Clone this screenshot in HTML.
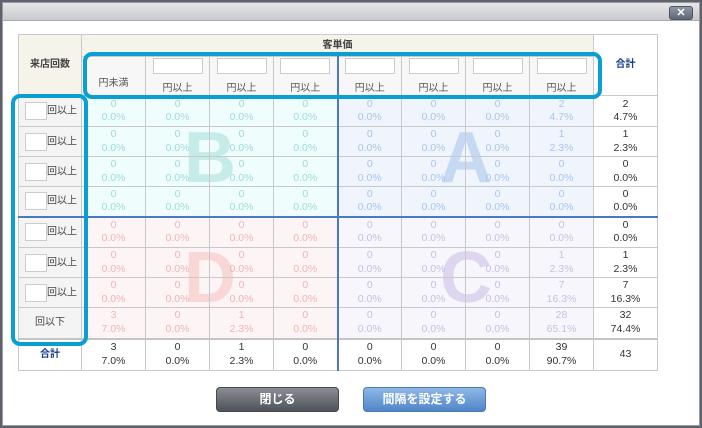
<!DOCTYPE html>
<html><head><meta charset="utf-8"><style>
*{margin:0;padding:0;box-sizing:border-box}
body{width:702px;height:428px;overflow:hidden;background:#5d626c;font-family:"Liberation Sans","Noto Sans CJK JP",sans-serif;position:relative}
.win{position:absolute;left:2px;top:2px;width:698px;height:424px;background:#fff;border:1px solid #9a9ca2}
.title{position:absolute;left:0;top:0;width:100%;height:18px;background:linear-gradient(#e6e6e8,#c9cacd);border-bottom:1px solid #a9abb0}
.x{position:absolute;left:666px;top:3px;width:24px;height:14px;border-radius:3px;background:linear-gradient(#8f97a6,#5f6878);border:1px solid #4d5562;color:#fff;font-size:11px;text-align:center;line-height:12px;font-weight:bold}
.q{position:absolute}
.L{position:absolute;font-size:72px;font-weight:bold;line-height:72px;text-align:center;width:80px}
table{position:absolute;left:18px;top:34px;border-collapse:collapse;table-layout:fixed;font-size:10.5px}
td{border:1px solid #c9c9c9;text-align:center;vertical-align:middle;line-height:13.5px;padding:0;overflow:hidden}
.h{background:#f6f3ea;color:#444;font-weight:bold;font-size:10px}
.h2{background:#f7f7f7;color:#555;font-size:10px;vertical-align:bottom;padding-bottom:0}
.rh{background:#f4f4f4;color:#444;font-size:10px;text-align:right;padding-right:4px}
.box{display:inline-block;width:50px;height:16px;border:1px solid #ccc;background:#fff;margin-bottom:3px}
.sb{display:inline-block;width:22px;height:18px;border:1px solid #ccc;background:#fff;vertical-align:middle}
.tot{background:#fff;color:#333}
.blue{color:#1a3f8f;font-weight:bold;font-size:10px}
.b{color:#9edcd6}.a{color:#a9c5ec}.d{color:#f2b3b3}.c{color:#c8bfe3}
.ring{position:absolute;border:4px solid #0a9fd2;border-radius:9px}
.btn{position:absolute;top:387px;height:25px;width:123px;border-radius:4px;color:#fff;font-size:12px;font-weight:bold;text-align:center;line-height:23px}
tr.r td{height:30px}
tr.s td{height:31px}
</style></head><body>
<div class="win"><div class="title"></div><div class="x">✕</div></div>
<div class="q" style="left:81px;top:95px;width:256px;height:121px;background:#f0fdfd"></div>
<div class="q" style="left:337px;top:95px;width:256px;height:121px;background:#eff4fd"></div>
<div class="q" style="left:81px;top:216px;width:256px;height:122px;background:#fdf5f5"></div>
<div class="q" style="left:337px;top:216px;width:256px;height:122px;background:#f7f6fc"></div>
<div class="L" style="left:170px;top:122px;color:#c6ecea">B</div>
<div class="L" style="left:426px;top:122px;color:#c6d9f3">A</div>
<div class="L" style="left:170px;top:242px;color:#f9d7d7">D</div>
<div class="L" style="left:426px;top:242px;color:#ddd6ee">C</div>
<table>
<colgroup><col style="width:63px"><col style="width:64px"><col style="width:64px"><col style="width:64px"><col style="width:64px"><col style="width:64px"><col style="width:64px"><col style="width:64px"><col style="width:64px"><col style="width:64px"></colgroup>
<tr><td class="h" rowspan="2" style="height:61px">来店回数</td><td class="h" colspan="8" style="height:22px">客単価</td><td class="tot blue" rowspan="2">合計</td></tr>
<tr><td class="h2" style="padding-bottom:5px;height:39px">円未満</td>
<td class="h2"><span class="box"></span><br>円以上</td><td class="h2"><span class="box"></span><br>円以上</td><td class="h2" style="border-right:2px solid #4a78c4"><span class="box"></span><br>円以上</td><td class="h2"><span class="box"></span><br>円以上</td><td class="h2"><span class="box"></span><br>円以上</td><td class="h2"><span class="box"></span><br>円以上</td><td class="h2"><span class="box"></span><br>円以上</td></tr>
<tr class="s"><td class="rh"><span class="sb"></span>回以上</td><td class="b">0<br>0.0%</td><td class="b">0<br>0.0%</td><td class="b">0<br>0.0%</td><td class="b" style="border-right:2px solid #4a78c4">0<br>0.0%</td><td class="a">0<br>0.0%</td><td class="a">0<br>0.0%</td><td class="a">0<br>0.0%</td><td class="a">2<br>4.7%</td><td class="tot">2<br>4.7%</td></tr>
<tr class="r"><td class="rh"><span class="sb"></span>回以上</td><td class="b">0<br>0.0%</td><td class="b">0<br>0.0%</td><td class="b">0<br>0.0%</td><td class="b" style="border-right:2px solid #4a78c4">0<br>0.0%</td><td class="a">0<br>0.0%</td><td class="a">0<br>0.0%</td><td class="a">0<br>0.0%</td><td class="a">1<br>2.3%</td><td class="tot">1<br>2.3%</td></tr>
<tr class="r"><td class="rh"><span class="sb"></span>回以上</td><td class="b">0<br>0.0%</td><td class="b">0<br>0.0%</td><td class="b">0<br>0.0%</td><td class="b" style="border-right:2px solid #4a78c4">0<br>0.0%</td><td class="a">0<br>0.0%</td><td class="a">0<br>0.0%</td><td class="a">0<br>0.0%</td><td class="a">0<br>0.0%</td><td class="tot">0<br>0.0%</td></tr>
<tr class="r" style="border-bottom:2px solid #4a78c4"><td class="rh"><span class="sb"></span>回以上</td><td class="b">0<br>0.0%</td><td class="b">0<br>0.0%</td><td class="b">0<br>0.0%</td><td class="b" style="border-right:2px solid #4a78c4">0<br>0.0%</td><td class="a">0<br>0.0%</td><td class="a">0<br>0.0%</td><td class="a">0<br>0.0%</td><td class="a">0<br>0.0%</td><td class="tot">0<br>0.0%</td></tr>
<tr class="s"><td class="rh"><span class="sb"></span>回以上</td><td class="d">0<br>0.0%</td><td class="d">0<br>0.0%</td><td class="d">0<br>0.0%</td><td class="d" style="border-right:2px solid #4a78c4">0<br>0.0%</td><td class="c">0<br>0.0%</td><td class="c">0<br>0.0%</td><td class="c">0<br>0.0%</td><td class="c">0<br>0.0%</td><td class="tot">0<br>0.0%</td></tr>
<tr class="r"><td class="rh"><span class="sb"></span>回以上</td><td class="d">0<br>0.0%</td><td class="d">0<br>0.0%</td><td class="d">0<br>0.0%</td><td class="d" style="border-right:2px solid #4a78c4">0<br>0.0%</td><td class="c">0<br>0.0%</td><td class="c">0<br>0.0%</td><td class="c">0<br>0.0%</td><td class="c">1<br>2.3%</td><td class="tot">1<br>2.3%</td></tr>
<tr class="r"><td class="rh"><span class="sb"></span>回以上</td><td class="d">0<br>0.0%</td><td class="d">0<br>0.0%</td><td class="d">0<br>0.0%</td><td class="d" style="border-right:2px solid #4a78c4">0<br>0.0%</td><td class="c">0<br>0.0%</td><td class="c">0<br>0.0%</td><td class="c">0<br>0.0%</td><td class="c">7<br>16.3%</td><td class="tot">7<br>16.3%</td></tr>
<tr class="s" style="border-bottom:2px solid #c4c4c4"><td class="rh" style="text-align:center;padding:0">回以下</td><td class="d">3<br>7.0%</td><td class="d">0<br>0.0%</td><td class="d">1<br>2.3%</td><td class="d" style="border-right:2px solid #4a78c4">0<br>0.0%</td><td class="c">0<br>0.0%</td><td class="c">0<br>0.0%</td><td class="c">0<br>0.0%</td><td class="c">28<br>65.1%</td><td class="tot">32<br>74.4%</td></tr>
<tr><td class="tot blue" style="height:32px">合計</td><td class="tot">3<br>7.0%</td><td class="tot">0<br>0.0%</td><td class="tot">1<br>2.3%</td><td class="tot" style="border-right:2px solid #4a78c4">0<br>0.0%</td><td class="tot">0<br>0.0%</td><td class="tot">0<br>0.0%</td><td class="tot">0<br>0.0%</td><td class="tot">39<br>90.7%</td><td class="tot">43</td></tr>
</table>
<div class="ring" style="left:83px;top:52px;width:519px;height:47px"></div>
<div class="ring" style="left:11px;top:94px;width:77px;height:252px"></div>
<div class="btn" style="left:216px;background:linear-gradient(#8a8d94,#4e5259);border:1px solid #44474d">閉じる</div>
<div class="btn" style="left:363px;background:linear-gradient(#8fb7e6,#4f86c9);border:1px solid #4a7bb8">間隔を設定する</div>
</body></html>
